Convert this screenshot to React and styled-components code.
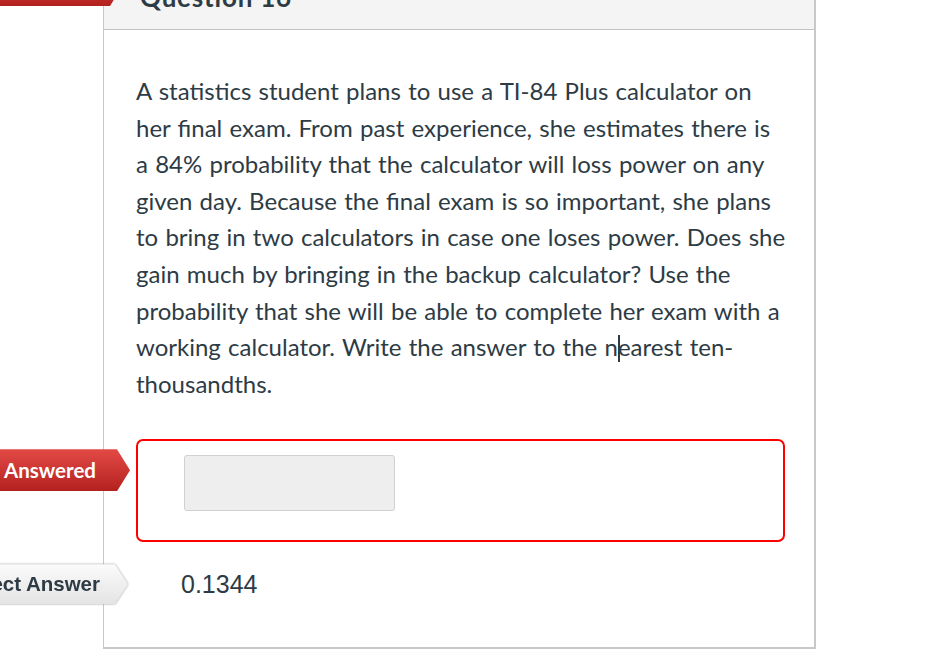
import React from 'react';
import styled, { createGlobalStyle } from 'styled-components';

const GlobalStyle = createGlobalStyle`
  html, body {
    margin: 0;
    padding: 0;
    background: #ffffff;
    overflow: hidden;
  }
  body {
    font-family: Lato, "Open Sans", "Liberation Sans", sans-serif;
    color: #2d3b45;
  }
`;

const Page = styled.div`
  width: 942px;
  height: 667px;
  overflow: hidden;
  padding-left: 103px;
  box-sizing: border-box;
`;

const Panel = styled.div`
  position: relative;
  width: 713px;
  margin-top: -20px;
  box-sizing: border-box;
  border: 1px solid #c8c8c8;
  border-right-width: 2px;
  border-bottom-width: 2px;
  background: #fff;
`;

const Header = styled.div`
  position: relative;
  height: 49px;
  box-sizing: border-box;
  background: #f4f4f4;
  border-bottom: 1px solid #c4c4c4;
  display: flex;
  align-items: flex-end;
  padding: 0 0 19px 36px;
`;

const HeaderTitle = styled.h2`
  margin: 0;
  font-size: 26px;
  line-height: 1;
  font-weight: 700;
  letter-spacing: 0.8px;
  color: #2d3b45;
`;

const Body = styled.div`
  padding: 43px 27px 43px 32px;
`;

const QuestionText = styled.p`
  margin: 0 0 37px;
  font-size: 24px;
  line-height: 36.6px;
  color: #2d3b45;
  word-spacing: 1.1px;
`;

const NoWrap = styled.span`
  white-space: nowrap;
`;

const Caret = styled.span`
  display: inline-block;
  width: 2px;
  height: 27px;
  margin-right: -2px;
  vertical-align: -6px;
  background: #2d3b45;
`;

const AnswerRow = styled.div`
  position: relative;
`;

const AnswerBox = styled.div`
  width: 649px;
  height: 103px;
  box-sizing: border-box;
  border: 2px solid #ff0000;
  border-radius: 7px;
  padding: 14px 0 0 46px;
`;

const Input = styled.div`
  width: 211px;
  height: 56px;
  box-sizing: border-box;
  background: #eeeeee;
  border: 1px solid #d0d0d0;
  border-radius: 3px;
`;

const CorrectRow = styled.div`
  position: relative;
  height: 40px;
  margin-top: 22px;
  display: flex;
  align-items: center;
  padding-left: 45px;
  font-family: "Liberation Sans", Arial, sans-serif;
  font-size: 25px;
  color: #2d3b45;
`;

const FlagWrap = styled.div`
  position: absolute;
  right: calc(100% + ${p => p.$gap}px);
  top: ${p => p.$top}px;
  width: 240px;
  height: ${p => p.$height}px;
  filter: ${p => (p.$light ? 'drop-shadow(0 0 1px #9a9a9a)' : 'none')};
`;

const Flag = styled.div`
  width: 100%;
  height: 100%;
  box-sizing: border-box;
  clip-path: polygon(0 0, calc(100% - 13px) 0, 100% 50%, calc(100% - 13px) 100%, 0 100%);
  background: ${p =>
    p.$light
      ? 'linear-gradient(#fbfbfb, #e4e4e4)'
      : 'linear-gradient(#e34a46, #b3211f)'};
  color: ${p => (p.$light ? '#2d3b45' : '#ffffff')};
  display: flex;
  align-items: center;
  justify-content: flex-end;
  padding-right: ${p => p.$pad}px;
  font-size: 20.5px;
  font-weight: 700;
  white-space: nowrap;
`;

const TopFlag = styled.div`
  position: absolute;
  left: -110px;
  top: -17px;
  width: 129px;
  height: 42px;
  clip-path: polygon(0 0, calc(100% - 13px) 0, 100% 50%, calc(100% - 13px) 100%, 0 100%);
  background: linear-gradient(#e34a46, #b3211f);
`;

export default function App() {
  return (
    <>
      <GlobalStyle />
      <Page>
        <Panel>
          <Header>
            <TopFlag />
            <HeaderTitle>Question 16</HeaderTitle>
          </Header>
          <Body>
            <QuestionText>
              A statistics student plans to use a TI-84 Plus calculator on her final exam. From past
              experience, she estimates there is a 84% probability that the calculator will loss power on
              any given day. Because the final exam is so important, she plans to bring in two calculators
              in case one loses power. Does she gain much by bringing in the backup calculator? Use the
              probability that she will be able to complete her exam with a working calculator. Write the
              answer to the <NoWrap>n<Caret />earest</NoWrap> ten-thousandths.
            </QuestionText>

            <AnswerRow>
              <FlagWrap $top={10} $height={42} $gap={6}>
                <Flag $pad={34}>You Answered</Flag>
              </FlagWrap>
              <AnswerBox>
                <Input />
              </AnswerBox>
            </AnswerRow>

            <CorrectRow>
              <FlagWrap $top={0} $height={40} $gap={8} $light>
                <Flag $pad={28} $light>Correct Answer</Flag>
              </FlagWrap>
              0.1344
            </CorrectRow>
          </Body>
        </Panel>
      </Page>
    </>
  );
}
